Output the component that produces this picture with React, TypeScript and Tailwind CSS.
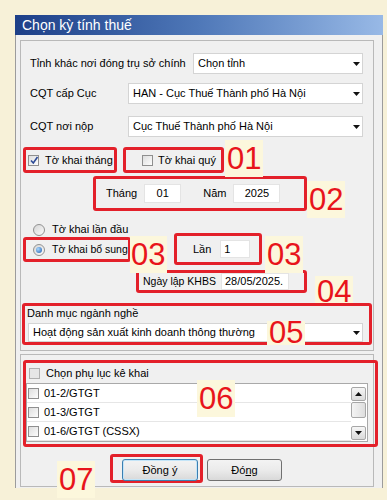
import React from 'react';

function RedBox({ className = '', children }: { className?: string; children?: React.ReactNode }) {
  return <div className={`border-[3px] border-[#e3202a] rounded-[3px] ${className}`}>{children}</div>;
}

function Num({ className = '', children }: { className?: string; children: React.ReactNode }) {
  return (
    <div className={`absolute bg-[#fcf7dc] text-[31px] text-[#e8141b] ${className}`}>{children}</div>
  );
}

function Arrow() {
  return (
    <svg width="7" height="4" viewBox="0 0 7 4" className="shrink-0">
      <path d="M0 0h7L3.5 4z" fill="#111" />
    </svg>
  );
}

function Combo({ text, className = '' }: { text: string; className?: string }) {
  return (
    <div className={`flex items-center bg-white border border-[#d4d4d4] pl-[4px] pr-[2px] ${className}`}>
      <span className="flex-1 truncate">{text}</span>
      <Arrow />
    </div>
  );
}

function Check({ checked = false, dim = false }: { checked?: boolean; dim?: boolean }) {
  return (
    <span
      className={`relative inline-block w-[11px] h-[11px] shrink-0 border ${
        dim ? 'border-[#b0b0b0] bg-[#e6e6e6]' : 'border-[#8f8f8f] bg-linear-to-br from-[#dedede] to-[#fdfdfd]'
      }`}
    >
      {checked && (
        <svg className="absolute left-[0px] top-[-1px]" width="11" height="11" viewBox="0 0 11 11">
          <path d="M2 5.5 L4.3 8 L8.5 2" stroke="#2c4a96" strokeWidth="1.6" fill="none" />
        </svg>
      )}
    </span>
  );
}

function Radio({ on = false }: { on?: boolean }) {
  return (
    <span className="flex items-center justify-center w-[12px] h-[12px] shrink-0 rounded-full border border-[#929292] bg-linear-to-br from-[#d6d6d6] to-[#fbfbfb]">
      {on && <span className="w-[6px] h-[6px] rounded-full bg-[radial-gradient(circle_at_35%_35%,#a8d8ff,#1d5cae)]" />}
    </span>
  );
}

function Field({ className = '', children }: { className?: string; children: React.ReactNode }) {
  return <div className={`flex items-center bg-white border border-[#e4e4e4] ${className}`}>{children}</div>;
}

function ScrollBtn({ up }: { up?: boolean }) {
  return (
    <div className="h-[14px] flex items-center justify-center border border-[#a7a7a7] rounded-[2px] bg-linear-to-b from-[#f6f6f6] to-[#dadada]">
      <svg width="7" height="4" viewBox="0 0 7 4">
        <path d={up ? 'M0 4h7L3.5 0z' : 'M0 0h7L3.5 4z'} fill="#111" />
      </svg>
    </div>
  );
}

export default function App() {
  const rows = ['01-2/GTGT', '01-3/GTGT', '01-6/GTGT (CSSX)'];

  return (
    <div className="relative w-[387px] h-[500px] overflow-hidden bg-[#f7f1d8] text-[11px] text-black whitespace-nowrap font-['Liberation_Sans',Arial,sans-serif]">
      <div className="ml-[15px] mt-[15px] w-[368px]">
        {/* title bar */}
        <div className="h-[20px] flex items-center pl-[7px] text-white text-[14px] bg-linear-to-r from-[#1d3f88] via-[#4f78b8] to-[#98b9e6]">
          Chọn kỳ tính thuế
        </div>

        <div className="bg-[#f0f0f0] border-l border-r border-[#9c9c9c] pl-[4px] pr-[8px] pt-[5px] pb-px">
          {/* upper panel */}
          <div className="w-[354px] border border-[#b9b9b9] bg-[#f0f0f0] pb-[5px]">
            <div className="mt-[12px] h-[21px] flex items-center pl-[9px]">
              <span className="w-[163px]">Tỉnh khác nơi đóng trụ sở chính</span>
              <Combo text="Chọn tỉnh" className="w-[170px] h-[21px]" />
            </div>
            <div className="mt-[9px] h-[21px] flex items-center pl-[9px]">
              <span className="w-[98px]">CQT cấp Cục</span>
              <Combo text="HAN - Cục Thuế Thành phố Hà Nội" className="w-[235px] h-[21px]" />
            </div>
            <div className="mt-[12px] h-[21px] flex items-center pl-[9px]">
              <span className="w-[98px]">CQT nơi nộp</span>
              <Combo text="Cục Thuế Thành phố Hà Nội" className="w-[235px] h-[21px]" />
            </div>

            {/* 01 */}
            <div className="mt-[10px] flex">
              <RedBox className="ml-[2px] w-[94px] h-[26px] flex items-center pl-[2px] gap-[6px]">
                <Check checked />
                <span>Tờ khai tháng</span>
              </RedBox>
              <RedBox className="ml-[6px] w-[101px] h-[26px] flex items-center pl-[16px] gap-[5px]">
                <Check />
                <span>Tờ khai quý</span>
              </RedBox>
            </div>

            {/* 02 */}
            <div className="mt-[3px] flex">
              <RedBox className="ml-[72px] w-[214px] h-[35px] flex items-center pl-[10px]">
                <span>Tháng</span>
                <Field className="ml-[7px] w-[37px] h-[19px] justify-center">01</Field>
                <span className="ml-[22px]">Năm</span>
                <Field className="ml-[7px] w-[47px] h-[19px] justify-center">2025</Field>
              </RedBox>
            </div>

            {/* 03 */}
            <div className="mt-[11px] flex items-start">
              <div className="w-[110px]">
                <div className="h-[15px] flex items-center pl-[12px] gap-[7px]">
                  <Radio />
                  <span>Tờ khai lần đầu</span>
                </div>
                <RedBox className="ml-[2px] w-[108px] h-[25px] flex items-center pl-[7px] gap-[7px]">
                  <Radio on />
                  <span className="text-[10.5px]">Tờ khai bổ sung</span>
                </RedBox>
              </div>
              <RedBox className="ml-[43px] mt-[11px] w-[88px] h-[32px] flex items-center pl-[16px]">
                <span>Lần</span>
                <Field className="ml-[9px] w-[30px] h-[18px] pl-[3px]">1</Field>
              </RedBox>
            </div>

            {/* 04 */}
            <div className="mt-[5px] flex">
              <RedBox className="ml-[115px] w-[171px] h-[23px] flex items-center pl-[4px]">
                <span className="w-[78px] text-[10.5px]">Ngày lập KHBS</span>
                <Field className="w-[68px] h-[17px] pl-[3px]">28/05/2025.</Field>
              </RedBox>
            </div>

            {/* 05 */}
            <RedBox className="relative z-[1] mt-[10px] ml-[1px] w-[350px] h-[42px]">
              <div className="h-[14px] leading-[14px] pl-[2px]">Danh mục ngành nghề</div>
              <Combo text="Hoạt động sản xuất kinh doanh thông thường" className="mt-[3px] ml-[3px] w-[335px] h-[19px]" />
            </RedBox>
          </div>

          {/* lower panel */}
          <div className="mt-[3px] w-[354px] border border-[#b9b9b9] bg-[#f0f0f0] pb-[3px]">
            <RedBox className="mt-[5px] ml-[2px] w-[355px] h-[87px]">
              <div className="h-[20px] flex items-center pl-[3px] gap-[6px]">
                <Check dim />
                <span>Chọn phụ lục kê khai</span>
              </div>
              <div className="w-[342px] h-[59px] flex border border-[#a9a9a9] bg-white">
                <div className="flex-1">
                  {rows.map((r) => (
                    <div key={r} className="h-[19px] flex items-center pl-px gap-[5px] border-b border-[#e6e6e6]">
                      <Check />
                      <span>{r}</span>
                    </div>
                  ))}
                </div>
                <div className="w-[16px] flex flex-col pt-[3px] pb-[1px] pr-px">
                  <ScrollBtn up />
                  <div className="h-[16px] mt-px border border-[#a7a7a7] rounded-[2px] bg-linear-to-r from-[#f4f4f4] to-[#dedede]" />
                  <div className="flex-1" />
                  <ScrollBtn />
                </div>
              </div>
            </RedBox>

            {/* 07 */}
            <div className="mt-[7px] flex items-start">
              <RedBox className="ml-[89px] w-[93px] h-[29px] pl-[9px] pt-[2px]">
                <button className="w-[76px] h-[22px] rounded-[3px] border border-[#3c7fb1] shadow-[inset_0_0_0_1px_#c4e5f8] bg-linear-to-b from-[#f3f3f3] via-[#ebebeb] to-[#d9d9d9] text-[11px]">
                  Đồn<span className="underline">g</span> ý
                </button>
              </RedBox>
              <button className="ml-[4px] mt-[5px] w-[75px] h-[22px] rounded-[3px] border border-[#707070] bg-linear-to-b from-[#f3f3f3] via-[#ebebeb] to-[#d9d9d9] text-[11px]">
                Đó<span className="underline">ng</span>
              </button>
            </div>
          </div>
        </div>
      </div>

      {/* annotation numbers */}
      <Num className="left-[225px] top-[140px] px-[2px] py-[3px] leading-[31px]">01</Num>
      <Num className="left-[307px] top-[181px] px-[2px] py-[3px] leading-[31px]">02</Num>
      <Num className="left-[130px] top-[236px] pl-px pr-[2px] py-[3px] leading-[31px]">03</Num>
      <Num className="left-[265px] top-[236px] px-[2px] py-[3px] leading-[31px]">03</Num>
      <Num className="left-[315px] top-[276px] px-[2px] pt-[4px] leading-[24px]">04</Num>
      <Num className="z-[2] left-[267px] top-[321px] px-[2px] leading-[24px]">05</Num>
      <Num className="left-[197px] top-[380px] px-[2px] py-[3px] leading-[31px]">06</Num>
      <Num className="left-[57px] top-[461px] px-[2px] py-[3px] leading-[31px]">07</Num>
    </div>
  );
}
